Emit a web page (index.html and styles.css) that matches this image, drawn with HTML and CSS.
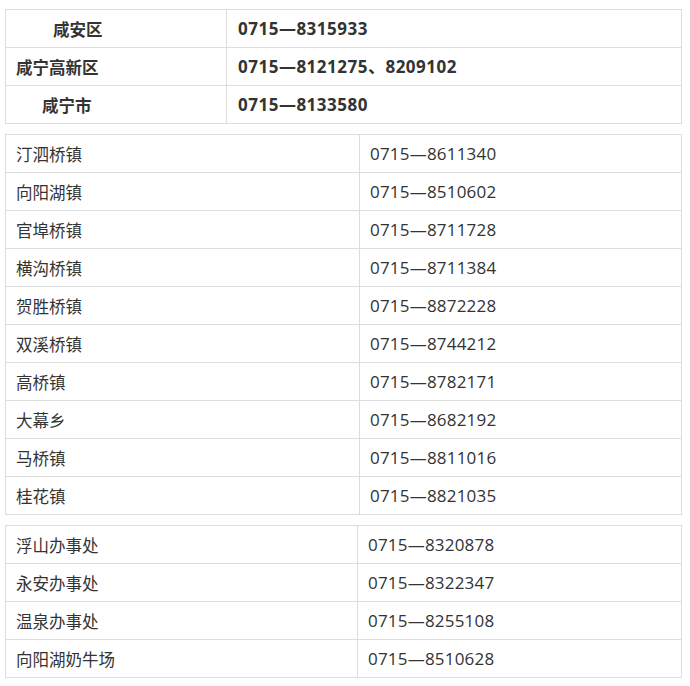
FILE: index.html
```html
<!DOCTYPE html>
<html lang="zh-CN">
<head>
<meta charset="utf-8">
<title>咸宁电话</title>
<link rel="stylesheet" href="styles.css">
</head>
<body>
<div class="page">
  <table class="tbl tbl-main">
    <colgroup><col class="c1-main"><col></colgroup>
    <tr><td class="name b ind-a">咸安区</td><td class="num b">0715—8315933</td></tr>
    <tr><td class="name b">咸宁高新区</td><td class="num b">0715—8121275、8209102</td></tr>
    <tr><td class="name b ind-b">咸宁市</td><td class="num b">0715—8133580</td></tr>
  </table>

  <table class="tbl tbl-town">
    <colgroup><col class="c1-town"><col></colgroup>
    <tr><td class="name">汀泗桥镇</td><td class="num">0715—8611340</td></tr>
    <tr><td class="name">向阳湖镇</td><td class="num">0715—8510602</td></tr>
    <tr><td class="name">官埠桥镇</td><td class="num">0715—8711728</td></tr>
    <tr><td class="name">横沟桥镇</td><td class="num">0715—8711384</td></tr>
    <tr><td class="name">贺胜桥镇</td><td class="num">0715—8872228</td></tr>
    <tr><td class="name">双溪桥镇</td><td class="num">0715—8744212</td></tr>
    <tr><td class="name">高桥镇</td><td class="num">0715—8782171</td></tr>
    <tr><td class="name">大幕乡</td><td class="num">0715—8682192</td></tr>
    <tr><td class="name">马桥镇</td><td class="num">0715—8811016</td></tr>
    <tr><td class="name">桂花镇</td><td class="num">0715—8821035</td></tr>
  </table>

  <table class="tbl tbl-office">
    <colgroup><col class="c1-office"><col></colgroup>
    <tr><td class="name">浮山办事处</td><td class="num">0715—8320878</td></tr>
    <tr><td class="name">永安办事处</td><td class="num">0715—8322347</td></tr>
    <tr><td class="name">温泉办事处</td><td class="num">0715—8255108</td></tr>
    <tr><td class="name">向阳湖奶牛场</td><td class="num">0715—8510628</td></tr>
  </table>
</div>
</body>
</html>
```

FILE: styles.css
```css
html, body {
  margin: 0;
  padding: 0;
  background: #ffffff;
}

.page {
  padding: 9px 0 0 5px;
  width: 677px;
  display: flex;
  flex-direction: column;
  gap: 10px;
  font-family: "Noto Sans CJK SC", "Noto Sans", sans-serif;
  color: #333333;
  font-size: 16px;
}

.tbl {
  width: 677px;
  border-collapse: collapse;
  table-layout: fixed;
}

.tbl td {
  border: 1px solid #dddddd;
  height: 38px;
  padding: 0 10px;
  line-height: 24px;
  vertical-align: middle;
  white-space: nowrap;
  box-sizing: border-box;
}

.tbl td.name {
  font-family: "Noto Sans CJK SC", sans-serif;
  font-size: 16.5px;
}

.tbl td.num {
  font-family: "Open Sans", "Noto Sans CJK SC", sans-serif;
  font-size: 17px;
  letter-spacing: 0.2px;
}

.c1-main { width: 221px; }
.c1-town { width: 354px; }
.c1-office { width: 352px; }

.tbl td.b { font-weight: bold; }
.tbl td.num.b { letter-spacing: 0.5px; }
.tbl-main td.num { padding-left: 11px; }

.tbl td.ind-a { padding-left: 47px; }
.tbl td.ind-b { padding-left: 36px; }
```
